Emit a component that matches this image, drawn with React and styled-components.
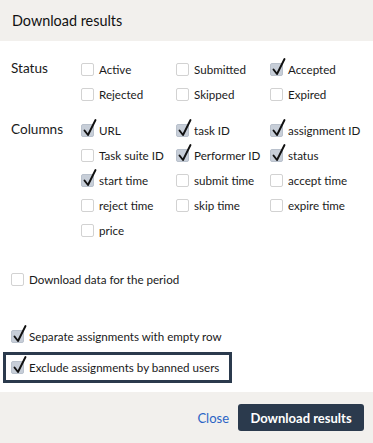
import React, { useState } from "react";
import styled, { createGlobalStyle } from "styled-components";

const GlobalStyle = createGlobalStyle`
  html, body {
    margin: 0;
    padding: 0;
    background: #fff;
  }
  body {
    font-family: Lato, "Liberation Sans", sans-serif;
    color: #1a1a1a;
  }
`;

const Dialog = styled.div`
  width: 373px;
  height: 443px;
  display: flex;
  flex-direction: column;
  background: #fff;
`;

const Header = styled.div`
  height: 41px;
  background: #f2f0ed;
  display: flex;
  align-items: center;
  padding: 0 12px;
  box-sizing: border-box;
  font-size: 14.4px;
  color: #111;
`;

const Body = styled.div`
  flex: 1;
  padding: 16px 0 0 0;
  display: flex;
  flex-direction: column;
`;

const Section = styled.div`
  display: grid;
  grid-template-columns: 70px 1fr;
  padding-left: 11px;
  margin-bottom: ${(p) => p.gap || 0}px;
`;

const SectionLabel = styled.div`
  font-size: 13.6px;
  height: 25px;
  line-height: 22px;
`;

const Options = styled.div`
  display: grid;
  grid-template-columns: 95px 94px 94px;
  grid-auto-rows: 25px;
`;

const Option = styled.label`
  display: flex;
  align-items: center;
  gap: 5px;
  font-size: 11.6px;
  color: #1a1a1a;
  white-space: nowrap;
  cursor: pointer;
`;

const Box = styled.span`
  position: relative;
  flex: none;
  width: 13px;
  height: 13px;
  box-sizing: border-box;
  border-radius: 2px;
  border: 1px solid ${(p) => (p.checked ? "#b9c1cc" : "#d2d2d2")};
  background: ${(p) => (p.checked ? "#c7ced8" : "#fff")};
`;

const Tick = styled.svg`
  position: absolute;
  left: 1px;
  top: -6px;
  width: 14px;
  height: 18px;
  overflow: visible;
`;

const SingleRow = styled.div`
  padding-left: 11px;
  height: 25px;
  display: flex;
  align-items: center;
  margin-top: ${(p) => p.top || 0}px;
`;

const Highlight = styled.div`
  margin: 3px 0 0 3px;
  width: 229px;
  height: 31px;
  box-sizing: border-box;
  border: 3px solid #2b3a4d;
  display: flex;
  align-items: center;
  padding-left: 5px;
`;

const Footer = styled.div`
  height: 51px;
  background: #f2f0ed;
  display: flex;
  align-items: center;
  justify-content: flex-end;
  gap: 9px;
  padding: 0 9px 0 0;
  box-sizing: border-box;
`;

const LinkButton = styled.button`
  border: none;
  background: none;
  padding: 0;
  font-family: inherit;
  font-size: 13px;
  color: #2a64c5;
  cursor: pointer;
`;

const PrimaryButton = styled.button`
  height: 27px;
  width: 126px;
  border: none;
  border-radius: 3px;
  background: #2b3a4d;
  color: #fff;
  font-family: inherit;
  font-weight: 700;
  font-size: 13px;
  cursor: pointer;
`;

const Check = ({ label, initial }) => {
  const [on, setOn] = useState(!!initial);
  return (
    <Option onClick={() => setOn(!on)}>
      <Box checked={on}>
        {on && (
          <Tick viewBox="0 0 14 18">
            <path d="M1.5 11.5 L5 16 L12.5 1" fill="none" stroke="#111" strokeWidth="1.9" strokeLinecap="round" strokeLinejoin="round" />
          </Tick>
        )}
      </Box>
      {label}
    </Option>
  );
};

const statusOpts = [
  ["Active"], ["Submitted"], ["Accepted", true],
  ["Rejected"], ["Skipped"], ["Expired"],
];

const columnOpts = [
  ["URL", true], ["task ID", true], ["assignment ID", true],
  ["Task suite ID"], ["Performer ID", true], ["status", true],
  ["start time", true], ["submit time"], ["accept time"],
  ["reject time"], ["skip time"], ["expire time"],
  ["price"],
];

export default function App() {
  return (
    <>
      <GlobalStyle />
      <Dialog>
        <Header>Download results</Header>
        <Body>
          <Section gap={11}>
            <SectionLabel>Status</SectionLabel>
            <Options>
              {statusOpts.map(([l, c]) => <Check key={l} label={l} initial={c} />)}
            </Options>
          </Section>
          <Section>
            <SectionLabel>Columns</SectionLabel>
            <Options>
              {columnOpts.map(([l, c]) => <Check key={l} label={l} initial={c} />)}
            </Options>
          </Section>
          <SingleRow top={24}>
            <Check label="Download data for the period" />
          </SingleRow>
          <SingleRow top={32}>
            <Check label="Separate assignments with empty row" initial />
          </SingleRow>
          <Highlight>
            <Check label="Exclude assignments by banned users" initial />
          </Highlight>
        </Body>
        <Footer>
          <LinkButton>Close</LinkButton>
          <PrimaryButton>Download results</PrimaryButton>
        </Footer>
      </Dialog>
    </>
  );
}
